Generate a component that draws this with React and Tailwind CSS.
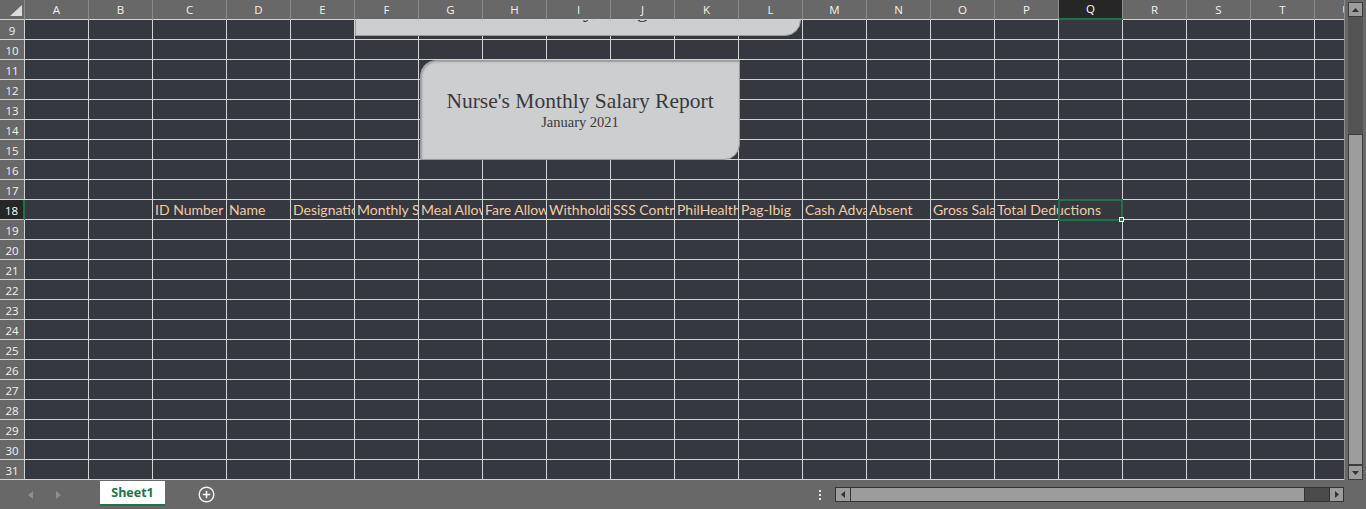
import React from "react";

const colLetters = ["A", "B", "C", "D", "E", "F", "G", "H", "I", "J", "K", "L", "M", "N", "O", "P", "Q", "R", "S", "T", "U"];
const rows = Array.from({ length: 23 }, (_, i) => i + 9);

const headerRow = {
  C: "ID Number",
  D: "Name",
  E: "Designation",
  F: "Monthly Salary",
  G: "Meal Allowance",
  H: "Fare Allowance",
  I: "Withholding Tax",
  J: "SSS Contribution",
  K: "PhilHealth",
  L: "Pag-Ibig",
  M: "Cash Advance",
  N: "Absent",
  O: "Gross Salary",
  P: "Total Deductions",
};

const uiFont = { fontFamily: '"Open Sans", "Noto Sans", sans-serif' };

function CornerCell() {
  return (
    <div className="relative z-30 flex h-[20px] items-end justify-end border-r border-b border-r-[#8c8c8c] border-b-[#d2d2d2] bg-[#686868] pr-[2px] pb-[3px]">
      <svg width="12" height="11" viewBox="0 0 12 11">
        <polygon points="12,0 12,11 0,11" fill="#dcdcdc" />
      </svg>
    </div>
  );
}

function ColHeader({ letter }) {
  const active = letter === "Q";
  return (
    <div
      className={`relative z-30 flex h-[20px] items-center justify-center text-[11.5px] ${
        active
          ? "border-r border-b-2 border-r-[#8c8c8c] border-b-[#217346] bg-[#262626] text-white"
          : "border-r border-b border-r-[#8c8c8c] border-b-[#d2d2d2] bg-[#686868] text-[#f2f2f2]"
      }`}
      style={uiFont}
    >
      {letter}
    </div>
  );
}

function RowHeader({ n }) {
  const active = n === 18;
  return (
    <div
      className={`flex h-[20px] items-center justify-center pt-[2px] text-[11.5px] ${
        active
          ? "border-r-2 border-b border-r-[#217346] border-b-[#d2d2d2] bg-[#262626] text-white"
          : "border-r border-b border-r-[#d2d2d2] border-b-[#d2d2d2] bg-[#686868] text-[#f2f2f2]"
      }`}
      style={uiFont}
    >
      {n}
    </div>
  );
}

function Cell({ row, letter }) {
  const text = row === 18 ? headerRow[letter] : null;
  const spill = letter === "P";
  const selected = row === 18 && letter === "Q";
  return (
    <div className="relative h-[20px] border-r border-b border-[#d4d4d4] bg-[#363840]">
      {text && (
        <div className={spill ? "relative z-10" : "overflow-hidden"}>
          <span
            className="block whitespace-nowrap pl-[2px] text-[14px] leading-[19px] text-[#efcba6]"
            style={{ fontFamily: 'Lato, "Open Sans", sans-serif' }}
          >
            {text}
          </span>
        </div>
      )}
      {selected && (
        <div className="absolute -top-[1px] -left-[1px] z-20 h-[22px] w-[65px] border-2 border-[#217346]">
          <div className="absolute -right-[3px] -bottom-[3px] h-[5px] w-[5px] border border-white bg-[#217346]" />
        </div>
      )}
    </div>
  );
}

function VScroll() {
  return (
    <div className="flex w-[21px] shrink-0 justify-center bg-[#686868] pt-[2px]">
      <div className="flex w-[15px] flex-col bg-[#545454]">
        <div className="flex h-[15px] items-center justify-center border border-[#3c3c3c] bg-[#9c9c9c]">
          <svg width="7" height="4" viewBox="0 0 7 4">
            <polygon points="3.5,0 7,4 0,4" fill="#333" />
          </svg>
        </div>
        <div className="h-[117px]" />
        <div className="flex-1 border border-[#3c3c3c] bg-[#9d9d9d]" />
        <div className="flex h-[15px] items-center justify-center border border-[#3c3c3c] bg-[#9c9c9c]">
          <svg width="7" height="4" viewBox="0 0 7 4">
            <polygon points="0,0 7,0 3.5,4" fill="#333" />
          </svg>
        </div>
      </div>
    </div>
  );
}

function BottomBar() {
  return (
    <div className="flex h-[29px] items-center bg-[#686868]" style={uiFont}>
      <div className="flex w-[100px] items-center gap-[23px] pl-[28px]">
        <svg width="5" height="8" viewBox="0 0 5 8">
          <polygon points="5,0 5,8 0,4" fill="#8e8e8e" />
        </svg>
        <svg width="5" height="8" viewBox="0 0 5 8">
          <polygon points="0,0 0,8 5,4" fill="#8e8e8e" />
        </svg>
      </div>
      <div className="mt-[1px] flex h-[25px] w-[65px] items-center justify-center self-start border-b-2 border-[#217346] bg-white pt-[1px]">
        <span className="text-[12.5px] font-bold text-[#217346]">Sheet1</span>
      </div>
      <div className="ml-[33px]">
        <svg width="17" height="17" viewBox="0 0 17 17">
          <circle cx="8.5" cy="8.5" r="7.3" fill="none" stroke="#f4f4f4" strokeWidth="1.4" />
          <line x1="8.5" y1="4.8" x2="8.5" y2="12.2" stroke="#f4f4f4" strokeWidth="1.6" />
          <line x1="4.8" y1="8.5" x2="12.2" y2="8.5" stroke="#f4f4f4" strokeWidth="1.6" />
        </svg>
      </div>
      <div className="flex-1" />
      <div className="mr-[14px] flex flex-col gap-[2px]">
        <div className="h-[2px] w-[2px] bg-[#e6e6e6]" />
        <div className="h-[2px] w-[2px] bg-[#e6e6e6]" />
        <div className="h-[2px] w-[2px] bg-[#e6e6e6]" />
      </div>
      <div className="flex h-[15px] w-[509px] border border-[#333]">
        <div className="flex w-[15px] items-center justify-center border-r border-[#333] bg-[#9c9c9c]">
          <svg width="4" height="7" viewBox="0 0 4 7">
            <polygon points="4,0 4,7 0,3.5" fill="#333" />
          </svg>
        </div>
        <div className="w-[454px] border-r border-[#333] bg-[#9c9c9c]" />
        <div className="flex-1 bg-[#4b4b4b]" />
        <div className="flex w-[14px] items-center justify-center border-l border-[#333] bg-[#9c9c9c]">
          <svg width="4" height="7" viewBox="0 0 4 7">
            <polygon points="0,0 0,7 4,3.5" fill="#333" />
          </svg>
        </div>
      </div>
      <div className="w-[22px]" />
    </div>
  );
}

export default function App() {
  return (
    <div className="flex h-[509px] w-[1366px] flex-col overflow-hidden bg-[#686868]">
      <div className="flex h-[480px]">
        <div className="relative w-[1345px] overflow-hidden">
          <div className="grid w-[1380px] grid-cols-[25px_64px_64px_74px_64px_64px_64px_64px_64px_64px_64px_64px_64px_64px_64px_64px_64px_64px_64px_64px_64px_64px]">
            <CornerCell />
            {colLetters.map((l) => (
              <ColHeader key={l} letter={l} />
            ))}
            {rows.map((r) => (
              <React.Fragment key={r}>
                <RowHeader n={r} />
                {colLetters.map((l) => (
                  <Cell key={l} row={r} letter={l} />
                ))}
              </React.Fragment>
            ))}
          </div>

          {/* shape above, mostly under the column headers */}
          <div className="absolute top-[-60px] left-[355px] z-20 h-[96px] w-[446px] overflow-hidden rounded-br-[16px] border border-[#9a9a9a] bg-[#cdced0]">
            <div
              className="absolute top-[56px] left-[133px] whitespace-nowrap text-[22px] leading-[26px] text-[#333]"
              style={{ fontFamily: '"Liberation Serif", serif' }}
            >
              Community, Pangasinan
            </div>
          </div>

          {/* report title shape */}
          <div
            className="absolute top-[60px] left-[420px] z-20 flex h-[100px] w-[320px] flex-col items-center justify-center rounded-tl-[16px] rounded-br-[16px] border border-[#9a9a9a] bg-[#cdced0] text-[#3a3a3a] shadow-[inset_1px_1px_2px_rgba(0,0,0,0.25)]"
            style={{ fontFamily: '"Liberation Serif", serif' }}
          >
            <div className="text-[21.5px] leading-[25px]">Nurse's Monthly Salary Report</div>
            <div className="text-[14.5px] leading-[17px]">January 2021</div>
          </div>
          <div className="absolute top-0 right-0 z-40 h-[480px] w-[1px] bg-[#8c8c8c]" />
        </div>
        <VScroll />
      </div>
      <BottomBar />
    </div>
  );
}
